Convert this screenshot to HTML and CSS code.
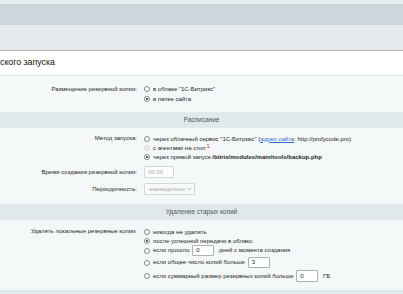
FILE: index.html
```html
<!DOCTYPE html>
<html lang="ru">
<head>
  <meta charset="UTF-8">
  <title>Резервное копирование</title>
  <link rel="stylesheet" href="styles.css">
</head>
<body>
  <div class="top-strip"></div>
  <div class="tabs"></div>
  <div class="subtabs"></div>
  <div class="title">ского запуска</div>

  <div class="form">
    <div class="row row-place">
      <div class="label">Размещение резервной копии:</div>
      <div class="field">
        <div class="opt"><span class="radio"></span><span>в облаке &quot;1С-Битрикс&quot;</span></div>
        <div class="opt"><span class="radio checked"></span><span>в папке сайта</span></div>
      </div>
    </div>

    <div class="section">Расписание</div>

    <div class="row row-method">
      <div class="label">Метод запуска:</div>
      <div class="field">
        <div class="opt"><span class="radio"></span><span>через облачный сервис &quot;1С-Битрикс&quot; (<a href="#">адрес сайта</a>: http://profycode.pro)</span></div>
        <div class="opt"><span class="radio disabled"></span><span>с агентами на стоп<span class="note">1</span></span></div>
        <div class="opt"><span class="radio checked"></span><span>через прямой запуск <b>/bitrix/modules/main/tools/backup.php</b></span></div>
      </div>
    </div>

    <div class="row row-time">
      <div class="label">Время создания резервной копии:</div>
      <div class="field">
        <span class="input input-time disabled">00:30</span>
      </div>
    </div>

    <div class="row row-period">
      <div class="label">Периодичность:</div>
      <div class="field">
        <span class="select disabled"><span>еженедельно</span>
          <svg class="chevron" viewBox="0 0 8 5" width="6" height="4"><path d="M1 1l3 3 3-3" fill="none" stroke="#a3abad" stroke-width="1.1"/></svg>
        </span>
      </div>
    </div>

    <div class="section">Удаление старых копий</div>

    <div class="row row-delete">
      <div class="label">Удалять локальные резервные копии:</div>
      <div class="field">
        <div class="opt"><span class="radio"></span><span>никогда не удалять</span></div>
        <div class="opt"><span class="radio checked"></span><span>после успешной передачи в облако</span></div>
        <div class="opt opt-input"><span class="radio"></span><span>если прошло <span class="input input-num">0</span> дней с момента создания</span></div>
        <div class="opt opt-input"><span class="radio"></span><span>если общее число копий больше <span class="input input-num">3</span></span></div>
        <div class="opt opt-input last"><span class="radio"></span><span>если суммарный размер резервных копий больше <span class="input input-num">0</span> ГБ</span></div>
      </div>
    </div>
  </div>

  <div class="bottom-strip"></div>
</body>
</html>
```

FILE: styles.css
```css
body {
  margin: 0;
  padding: 0;
  background: #f5f8f9;
  color: #1f2526;
  font-family: "Liberation Sans", Arial, sans-serif;
  font-size: 6px;
  overflow: hidden;
}

.top-strip {
  height: 4px;
  background: #e9edef;
}

.tabs {
  height: 21px;
  background: #cdd6da;
}

.subtabs {
  height: 25px;
  background: #e4eaed;
  border-bottom: 1px solid #a9b3b7;
}

.title {
  height: 24px;
  line-height: 23px;
  background: #fff;
  border-bottom: 1px solid #dbe2e4;
  font-size: 8.8px;
  color: #111;
}

.form {
  padding-bottom: 8px;
}

.row {
  display: grid;
  grid-template-columns: 140px 1fr;
}

.label {
  text-align: right;
  padding-right: 3px;
  line-height: 9px;
}

.field {
  padding-left: 4px;
}

.opt {
  display: flex;
  align-items: center;
  height: 9px;
  white-space: nowrap;
}

.opt-input {
  height: 11px;
}

.opt-input:nth-child(4) {
  margin-top: 1px;
}

.opt-input.last {
  height: 12px;
  margin-top: 2px;
}

.radio {
  box-sizing: border-box;
  width: 6px;
  height: 6px;
  border: 1px solid #7f898c;
  border-radius: 50%;
  background: #fff;
  margin-right: 3px;
  position: relative;
  flex: none;
}

.radio.checked::after {
  content: "";
  position: absolute;
  left: 1px;
  top: 1px;
  width: 2px;
  height: 2px;
  border-radius: 50%;
  background: #2b2f30;
}

.radio.disabled {
  border-color: #d3d9db;
  background: #eef1f2;
}

.row-place {
  padding: 8px 0 8px;
}

.row-place .opt {
  height: 10px;
}

.row-place .label {
  line-height: 10px;
}

.section {
  height: 16px;
  line-height: 16px;
  background: #e1e8ea;
  text-align: center;
  color: #4a5a5e;
  font-size: 6.5px;
}

.row-method {
  padding-top: 6px;
}

.row-method a {
  color: #2a6fc9;
  text-decoration: underline;
}

.note {
  color: #d21a1a;
  font-size: 6px;
  position: relative;
  top: -2px;
  margin-left: 1px;
}

.row-time {
  padding-top: 5px;
}

.row-time .label,
.row-period .label {
  line-height: 12px;
}

.input {
  box-sizing: border-box;
  display: inline-block;
  height: 12px;
  line-height: 10px;
  padding-left: 3px;
  background: #fff;
  border: 1px solid #a9b3b6;
  border-radius: 1px;
  vertical-align: middle;
}

.input.disabled {
  border-color: #d0d7d9;
  color: #a4abad;
}

.input-time {
  width: 30px;
}

.input-num {
  width: 22px;
  height: 11px;
  line-height: 9px;
  margin: 0 3px 0 1px;
}

.opt-input.last .input-num {
  height: 12px;
  line-height: 10px;
}

.row-period {
  padding: 5px 0 9px;
}

.select {
  box-sizing: border-box;
  display: inline-flex;
  align-items: center;
  justify-content: space-between;
  width: 51px;
  height: 12px;
  padding: 0 2px 0 4px;
  border: 1px solid #d3d9db;
  border-radius: 1px;
  background: #f7f9fa;
  color: #a7aeb0;
  font-size: 5.8px;
}

.row-delete {
  padding-top: 7px;
}

.bottom-strip {
  height: 4px;
  background: #e1e8ea;
}
```
